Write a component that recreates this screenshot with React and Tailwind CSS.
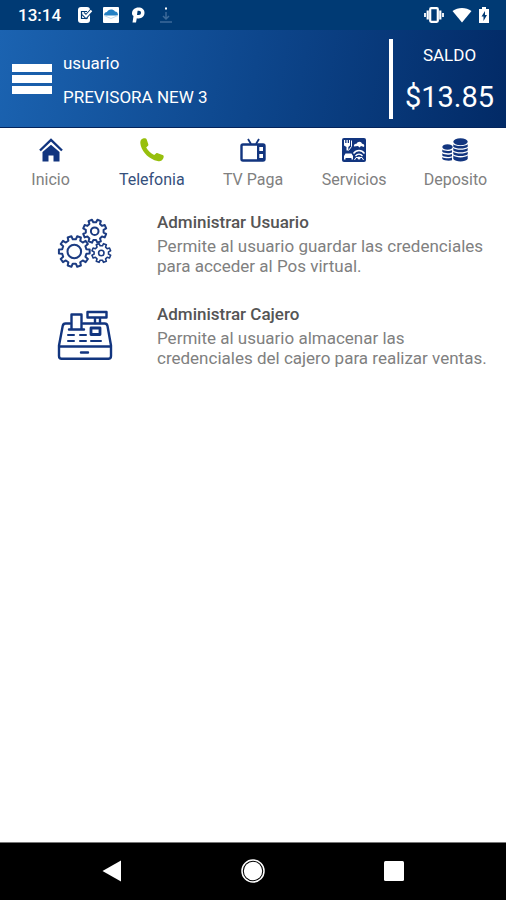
const tabs = [
  { label: 'Inicio', icon: HomeIcon },
  { label: 'Telefonia', icon: PhoneIcon, active: true },
  { label: 'TV Paga', icon: TvIcon },
  { label: 'Servicios', icon: ServicesIcon },
  { label: 'Deposito', icon: CoinsIcon },
]

const options = [
  {
    title: 'Administrar Usuario',
    text: 'Permite al usuario guardar las credenciales para acceder al Pos virtual.',
    icon: GearsIcon,
  },
  {
    title: 'Administrar Cajero',
    text: 'Permite al usuario almacenar las credenciales del cajero para realizar ventas.',
    icon: RegisterIcon,
  },
]

function HomeIcon() {
  return (
    <svg viewBox="0 0 24 24" className="w-6 h-6" fill="#12357f">
      <path d="M12 6.800 3.500 14V23.500h6v-6h5v6h6V14z" />
      <path d="M1 12.500 12 2l11 10.500" fill="none" stroke="#12357f" strokeWidth="2.400" />
    </svg>
  )
}

function PhoneIcon() {
  return (
    <svg viewBox="0 0 24 24" className="w-6 h-6" fill="#97bf0d">
      <path d="M1.300 1.600C2.500.5 4 0 5.200.2c.9.1 1.400.8 1.600 1.500l1.500 4.600c.2.9 0 1.400-.6 1.800L6.200 9.400c1.900 3.400 4.300 5.700 8 7.600l1.800-1.500c.5-.5 1.100-.5 1.700-.3l4.900 1.900c.9.4 1.200.9 1.100 1.700-.2 1.700-1.100 3.100-2.500 4-1 .6-2.400.5-3.700.2C9.200 21 3.100 15.200.8 7.700.2 5.400 0 3 1.300 1.600z" />
    </svg>
  )
}

function TvIcon() {
  return (
    <svg viewBox="0 0 26 24" className="w-[26px] h-6" fill="none" stroke="#12357f" strokeWidth="2.400">
      <path d="m8 1 3 5m8-5-3 5" strokeWidth="1.800" />
      <rect x="1.500" y="6.500" width="23" height="16" rx="1.500" />
      <path d="M17 6h8v17h-8z" fill="#12357f" stroke="none" />
      <path d="M19.300 9h3.700v4h-3.700zM19.300 16h3.700v4h-3.700z" fill="white" stroke="none" />
    </svg>
  )
}

function ServicesIcon() {
  return (
    <svg viewBox="0 0 24 24" className="w-6 h-6">
      <rect width="24" height="24" rx="2" fill="#12357f" />
      <g fill="white">
        <path d="M2 2h1.200v3h1.300V2h1.200v3H7V2h1v5.500L6.300 9v3.500H4.500V9L2 7.500z" />
        <path d="M12 8.500c-.5-2 1-3 2.500-2.700C15.500 3 19.500 3 20 5.800c2 0 2.700 1.700 2 3.200l-3-1-1.500 1.500L16 8z" />
        <path d="m2 18 1.500-2.500h6L11 18v3.500H9.500V20h-6v1.500H2z" />
      </g>
      <g fill="none" stroke="white" strokeWidth="1.300">
        <path d="M11.500 15.500c3-4 8-4 11 0M13.500 18c2-2.500 5-2.500 7 0" />
        <path d="M9.500 2.500v6l-3 4M12.500 22l1.500-2.500h6l1.500 2.500" strokeWidth="1" />
      </g>
      <circle cx="17" cy="20" r="1.500" fill="white" />
    </svg>
  )
}

function CoinsIcon() {
  return (
    <svg viewBox="0 0 26 24" className="w-[26px] h-6" fill="#12357f">
      <ellipse cx="18.500" cy="3.800" rx="7.200" ry="3.500" />
      <ellipse cx="5.500" cy="9" rx="5.200" ry="2.800" />
      <path d="M11.300 6.200c2 2.400 12.400 2.400 14.400 0v2.500c-2 2.400-12.400 2.400-14.400 0z" />
      <path d="M11.300 10c2 2.400 12.400 2.400 14.400 0v2.500c-2 2.400-12.400 2.400-14.400 0z" />
      <path d="M11.300 13.800c2 2.400 12.400 2.400 14.400 0v2.500c-2 2.400-12.400 2.400-14.400 0z" />
      <path d="M11.300 17.600c2 2.400 12.400 2.400 14.400 0V21c-2 3.200-12.400 3.200-14.400 0z" />
      <path d="M.3 11.500c1.700 1.700 7.500 1.900 9.700.7v2.300c-2.200 1.200-8 1-9.700-.7z" />
      <path d="M.3 15.200c1.700 1.700 7.500 1.900 9.700.7v2.300c-2.200 1.200-8 1-9.700-.7z" />
      <path d="M.3 18.900c1.700 1.700 7.500 1.900 9.700.7v2.700c-2.200.7-8 .500-9.700-1.200z" />
    </svg>
  )
}

// outline of a gear with flat teeth around (cx, cy)
function gearPath(cx, cy, outer, inner, teeth) {
  const step = (Math.PI * 2) / teeth
  const points = []
  for (let i = 0; i < teeth; i++) {
    const a = i * step - Math.PI / 2 + step / 2
    const corners = [
      [inner, -0.3],
      [outer, -0.2],
      [outer, 0.2],
      [inner, 0.3],
    ]
    corners.forEach(([r, t]) => {
      points.push(`${(cx + r * Math.cos(a + t * step)).toFixed(2)} ${(cy + r * Math.sin(a + t * step)).toFixed(2)}`)
    })
  }
  return `M${points.join('L')}Z`
}

function GearsIcon() {
  return (
    <svg viewBox="0 0 56 52" className="w-14 h-[52px]" fill="none" stroke="#1c3c82" strokeWidth="2" strokeLinejoin="round">
      <path d={gearPath(17.300, 33.500, 15.500, 12.300, 10)} />
      <circle cx="17.300" cy="33.500" r="6.800" />
      <path d={gearPath(37.700, 13.200, 11.800, 9, 8)} />
      <circle cx="37.700" cy="13.200" r="3.800" />
      <path d={gearPath(44.300, 35, 9.600, 7.300, 8)} strokeWidth="1.600" />
      <circle cx="44.300" cy="35" r="2.700" strokeWidth="1.600" />
    </svg>
  )
}

function RegisterIcon() {
  return (
    <svg viewBox="0 0 56 52" className="w-14 h-[52px]" fill="none" stroke="#12357f" strokeWidth="2.400" strokeLinecap="round" strokeLinejoin="round">
      <path d="M13 13.500H8.500c-1.500 0-2.500 1-2.800 2.500L2 35.500V46c0 1.700 1 2.700 2.700 2.700h46.600c1.700 0 2.700-1 2.700-2.700V35.500L50.500 16c-.3-1.500-1.300-2.500-2.800-2.500H26" />
      <path d="M2.500 36.500h51M24 42.500h7" />
      <path d="M14.500 19V4.500h10V19M12 19.500h15" />
      <path d="M30.500 2h19v5.500h-19zM38 8v5M43 8v5" />
      <path d="M34 18h9v6.500h-9z" strokeWidth="2.800" />
      <path d="M11 25h6M23 25h6M11 31h6M23 31h6M34 31h10" strokeWidth="2" />
    </svg>
  )
}

function StatusBar() {
  return (
    <div className="flex items-center h-[30px] bg-[#003a74] pl-[18px] pr-4 text-white">
      <span className="text-[17px] leading-6 font-medium">13:14</span>
      <svg viewBox="0 0 16 16" className="w-4 h-4 ml-4">
        <rect x="1" y="0" width="12" height="16" rx="3" fill="white" />
        <path d="M10 4.500H4.500v7H10V10" fill="none" stroke="#003a74" strokeWidth="1.200" />
        <path d="m6 6.500 3 3L15 3" fill="none" stroke="#003a74" strokeWidth="4" />
        <path d="m6 6.500 3 3L14.500 3.500" fill="none" stroke="white" strokeWidth="2" />
      </svg>
      <svg viewBox="0 0 16 16" className="w-4 h-4 ml-[10px]">
        <rect width="16" height="16" rx="1" fill="white" />
        <path d="M1 8.500C1 6 2.500 5 4 5c1-3 6-3.500 8-.5 2 0 3 1.500 3 4z" fill="#2480c3" />
        <path d="m1 8.500 7 3 7-3" fill="none" stroke="#c4dced" />
      </svg>
      <svg viewBox="0 0 16 16" className="w-4 h-4 ml-3">
        <path d="M7.500.5c3.600 0 6 2 6 5.300s-2.400 5.700-5.800 5.700c-.8 0-1.400-.1-1.900-.3L5 15.500H1.500L2.500 9C1.500 8.500 1 7.500 1 6.200 1.200 2.800 3.800.5 7.500.5z" fill="white" />
        <path d="M7.800 3.700c1.400 0 2.200.8 2.200 2.100s-.9 2.300-2.200 2.300H6l.6-4.400z" fill="#003a74" />
      </svg>
      <svg viewBox="0 0 14 16" className="w-[14px] h-4 ml-3" fill="none" stroke="#3c6a99" strokeWidth="1.500">
        <path d="M7 5v7M4 9l3 3 3-3M1 15h12" />
        <path d="M7 .5v2" stroke="white" strokeWidth="2" />
      </svg>
      <svg viewBox="0 0 20 16" className="w-5 h-4 ml-auto" fill="none" stroke="white">
        <rect x="6.200" y="1.200" width="7.600" height="13.600" rx="1" strokeWidth="2.200" />
        <path d="M3.700 3.500v9M16.300 3.500v9" strokeWidth="2.200" />
        <path d="M1 6v4M19 6v4" strokeWidth="1.800" />
      </svg>
      <svg viewBox="0 0 20 16" className="w-5 h-4 ml-2" fill="white">
        <path d="M.5 4C6 0 14 0 19.500 4L10 15.500z" />
      </svg>
      <svg viewBox="0 0 12 16" className="w-3 h-4 ml-[6px]">
        <path d="M4 0h4v2h3v14H1V2h3z" fill="white" />
        <path d="M7 4 3.500 9.500h2V14L9 8H7z" fill="#003a74" />
      </svg>
    </div>
  )
}

function Header() {
  return (
    <header className="flex items-center h-[98px] bg-linear-[100deg] from-[#1b63b1] via-[#0d468c] to-[#022a66] border-b border-[#03245c] text-white">
      <button type="button" aria-label="Menu" className="flex flex-col gap-[3px] ml-3">
        <span className="w-10 h-2 bg-white" />
        <span className="w-10 h-2 bg-white" />
        <span className="w-10 h-2 bg-white" />
      </button>
      <div className="flex flex-col gap-[10px] ml-[11px] pt-[2px] flex-1 text-[17px] leading-6">
        <p>usuario</p>
        <p>PREVISORA NEW 3</p>
      </div>
      <div className="w-1 h-20 bg-white" />
      <div className="flex flex-col items-center gap-[10px] w-[113px] pt-[2px]">
        <p className="text-[17px] leading-6">SALDO</p>
        <p className="text-[29px] leading-10">$13.85</p>
      </div>
    </header>
  )
}

function Tabs() {
  return (
    <nav className="grid grid-cols-5 pt-[10px] pb-1">
      {tabs.map(({ label, icon: Icon, active }) => (
        <a key={label} href="#" className="flex flex-col items-center gap-2">
          <Icon />
          <span className={active ? 'text-base leading-5 text-[#35507c]' : 'text-base leading-5 text-[#808080]'}>
            {label}
          </span>
        </a>
      ))}
    </nav>
  )
}

export default function App() {
  return (
    <div className="flex flex-col min-h-screen bg-white font-[Roboto,sans-serif]">
      <StatusBar />
      <Header />
      <Tabs />

      <main className="flex-1 flex flex-col gap-[26px] pt-4">
        {options.map(({ title, text, icon: Icon }) => (
          <a key={title} href="#" className="flex pl-[57px] pr-2">
            <div className="w-[100px] shrink-0 pt-2">
              <Icon />
            </div>
            <div className="flex flex-col gap-[2px]">
              <h2 className="text-[17px] leading-6 font-medium text-[#555]">{title}</h2>
              <p className="text-[17px] leading-5 text-[#808080]">{text}</p>
            </div>
          </a>
        ))}
      </main>

      <footer className="flex items-center justify-around h-[58px] px-[42px] pb-[2px] bg-black border-t border-[#777]">
        <button type="button" aria-label="Back">
          <svg viewBox="0 0 20 22" className="w-5 h-[22px]" fill="white">
            <path d="M19 .5v21L.5 11z" />
          </svg>
        </button>
        <button type="button" aria-label="Home">
          <svg viewBox="0 0 24 24" className="w-6 h-6">
            <circle cx="12" cy="12" r="11" fill="none" stroke="white" strokeWidth="1.500" />
            <circle cx="12" cy="12" r="9.200" fill="white" />
          </svg>
        </button>
        <button type="button" aria-label="Recents">
          <svg viewBox="0 0 20 20" className="w-5 h-5">
            <rect width="20" height="20" rx="1.500" fill="white" />
          </svg>
        </button>
      </footer>
    </div>
  )
}
